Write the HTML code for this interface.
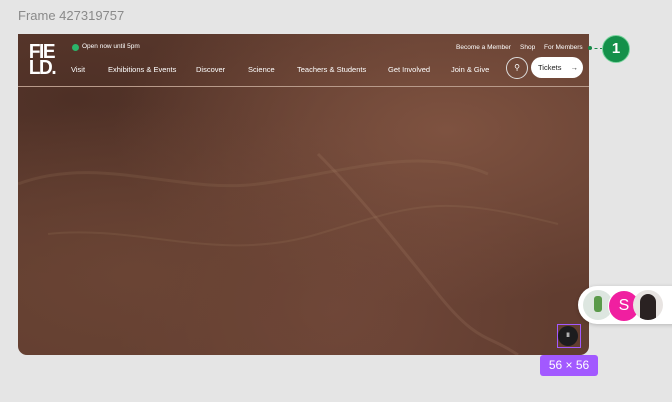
<!DOCTYPE html><html><head><style>
body{margin:0;width:672px;height:402px;background:#e5e5e5;position:relative;overflow:hidden;font-family:"Liberation Sans",sans-serif}
.t{position:absolute;white-space:nowrap}
#img{position:absolute;left:18px;top:34px;width:571px;height:321px;border-radius:0 0 9px 9px;overflow:hidden;
background:radial-gradient(ellipse at 20% 75%,#6a4434 0%,transparent 50%),radial-gradient(ellipse at 75% 30%,#7e5240 0%,transparent 55%),radial-gradient(ellipse at 55% 85%,#72483a 0%,transparent 50%),radial-gradient(ellipse at 10% 20%,#4e3026 0%,transparent 50%),#613d30}
.n{color:#fff;font-size:7.5px;top:31px}
</style></head><body>
<div class="t" style="left:18px;top:8px;font-size:13px;color:#8a8a8a">Frame 427319757</div>
<div id="img">
<svg width="571" height="321" style="position:absolute;left:0;top:0" fill="none">
<path d="M0 150 C80 120 160 160 240 150 S400 110 470 140" stroke="#b08a6e" stroke-width="3" opacity=".15"/>
<path d="M30 200 C120 190 200 230 300 200 S420 160 540 190" stroke="#b08a6e" stroke-width="2" opacity=".15"/>
<path d="M300 120 C340 160 380 210 420 260 S470 300 500 321" stroke="#c09a7e" stroke-width="3" opacity=".15"/>
</svg>
<div style="position:absolute;left:10px;top:10px;width:34px;height:34px;color:#fff;font-weight:900;font-size:20px;line-height:16px;letter-spacing:-1.5px;transform:scaleX(.95)">FIE<br>LD.</div>
<div style="position:absolute;left:54px;top:10px;width:7px;height:7px;border-radius:50%;background:#2bb56a"></div>
<div class="t" style="left:64px;top:9px;color:#fff;font-size:6.5px">Open now until 5pm</div>
<div class="t n" style="left:53px">Visit</div>
<div class="t n" style="left:90px">Exhibitions &amp; Events</div>
<div class="t n" style="left:178px">Discover</div>
<div class="t n" style="left:230px">Science</div>
<div class="t n" style="left:279px">Teachers &amp; Students</div>
<div class="t n" style="left:370px">Get Involved</div>
<div class="t n" style="left:433px">Join &amp; Give</div>
<div class="t" style="left:438px;top:10px;color:#fff;font-size:6.5px">Become a Member</div>
<div class="t" style="left:502px;top:10px;color:#fff;font-size:6.5px">Shop</div>
<div class="t" style="left:526px;top:10px;color:#fff;font-size:6.5px">For Members</div>
<div style="position:absolute;left:488px;top:23px;width:20px;height:20px;border:1px solid #ddd;border-radius:50%;color:#fff;font-size:8px;text-align:center;line-height:20px">⚲</div>
<div style="position:absolute;left:513px;top:23px;width:52px;height:21px;background:#fff;border-radius:11px;font-size:7.5px;line-height:21px;color:#222"><span style="margin-left:7px">Tickets</span><span style="margin-left:9px">→</span></div>
<div style="position:absolute;left:0;top:52px;width:571px;height:1px;background:#b89a8a"></div>
<div style="position:absolute;left:540px;top:292px;width:20px;height:20px;border-radius:50%;background:#1c1c1e;color:#fff;font-size:6px;text-align:center;line-height:20px;font-weight:bold">II</div>
</div>
<div style="position:absolute;left:557px;top:324px;width:22px;height:22px;border:1px solid #a259ff"></div>
<div style="position:absolute;left:540px;top:355px;width:58px;height:21px;background:#a259ff;border-radius:3px;color:#fff;font-size:12px;text-align:center;line-height:21px">56 × 56</div>
<div style="position:absolute;left:589px;top:48px;width:14px;border-top:1px dashed #1a8a4a"></div>
<div style="position:absolute;left:588px;top:46px;width:4px;height:4px;border-radius:50%;background:#1a8a4a"></div>
<div style="position:absolute;left:602px;top:35px;width:26px;height:26px;border-radius:50%;background:#14904a;border:1px solid #7ad49e;color:#fff;font-size:15px;font-weight:bold;text-align:center;line-height:26px">1</div>
<div style="position:absolute;left:578px;top:286px;width:118px;height:38px;background:#fff;border-radius:19px;box-shadow:0 1px 4px rgba(0,0,0,.2)"></div>
<div style="position:absolute;left:583px;top:290px;width:30px;height:30px;border-radius:50%;background:#dde6e0;overflow:hidden"><div style="margin:6px 0 0 11px;width:8px;height:16px;background:#5a9a4a;border-radius:3px"></div></div>
<div style="position:absolute;left:608px;top:290px;width:30px;height:30px;border-radius:50%;background:#f01fa0;color:#fff;font-size:16px;text-align:center;line-height:30px;border:1px solid #fff">S</div>
<div style="position:absolute;left:633px;top:290px;width:30px;height:30px;border-radius:50%;background:#e8e4e2;overflow:hidden"><div style="margin:4px 0 0 7px;width:16px;height:26px;background:#2a2222;border-radius:8px 8px 0 0"></div></div>
</body></html>
